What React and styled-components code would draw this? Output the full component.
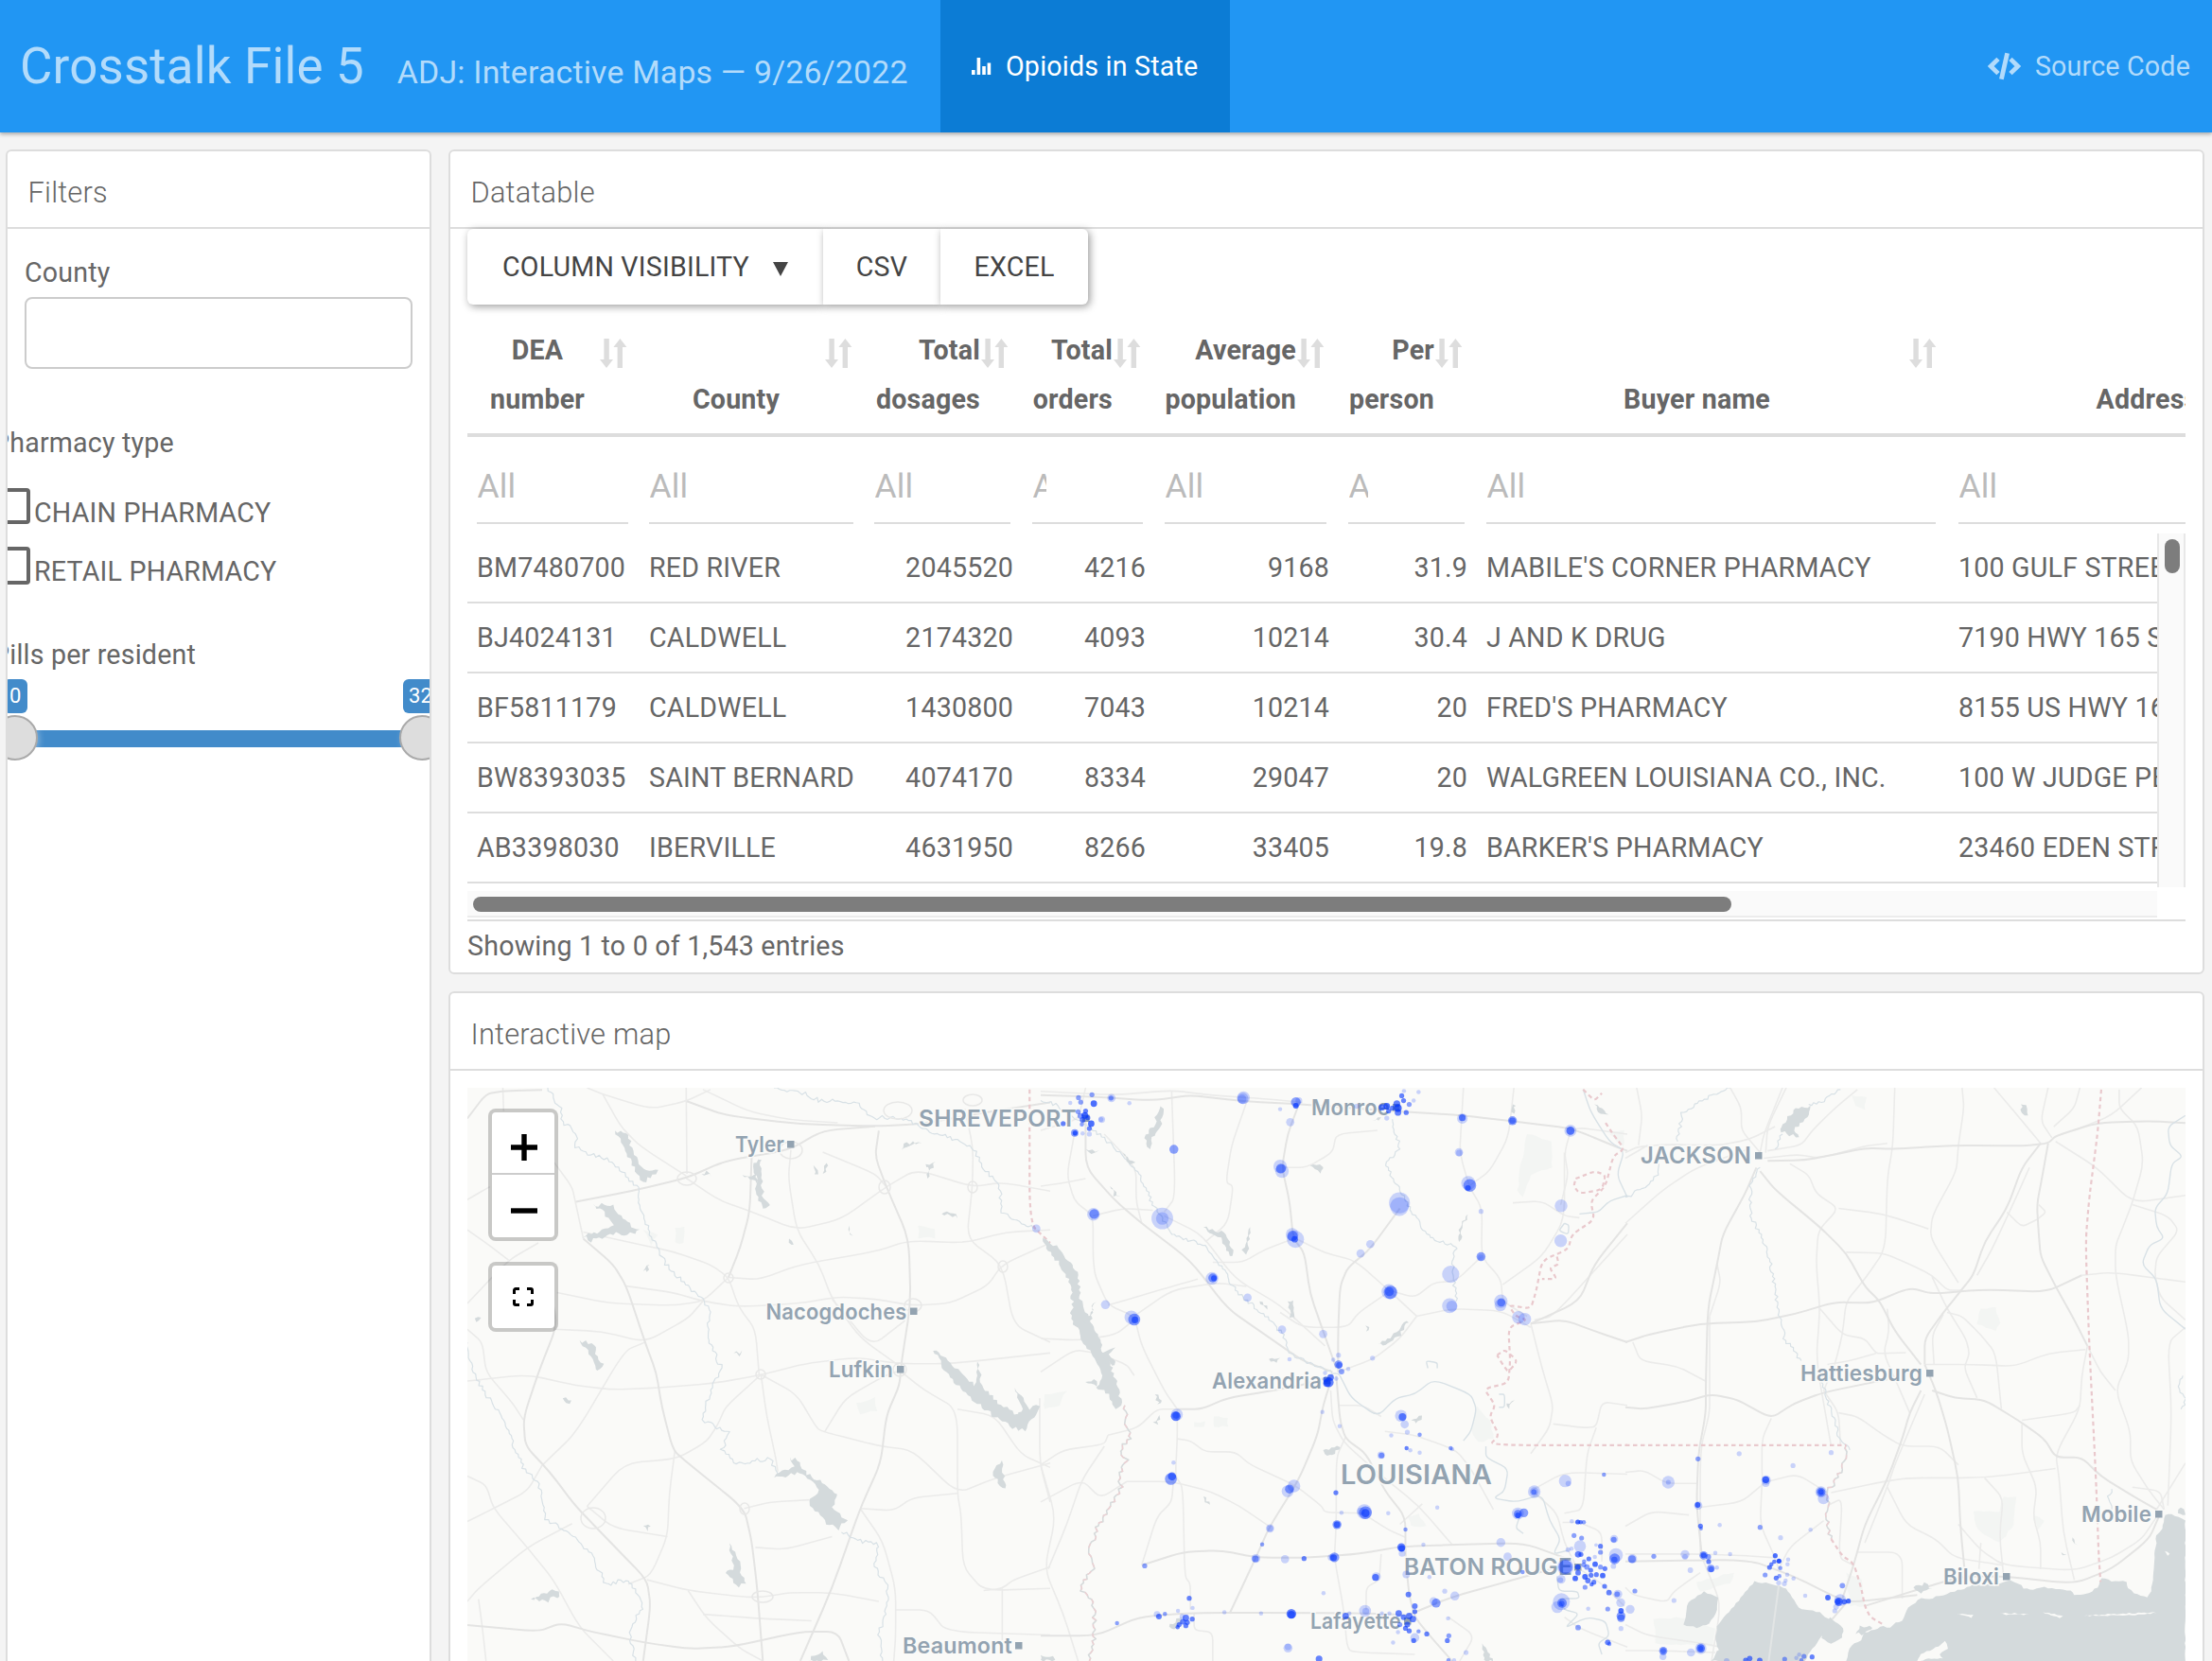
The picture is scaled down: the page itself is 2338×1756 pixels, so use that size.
import React from "react";
import styled, { createGlobalStyle } from "styled-components";

const GlobalStyle = createGlobalStyle`
  *, *::before, *::after { box-sizing: border-box; }
  html, body { margin: 0; padding: 0; }
  body {
    height: 1756px;
    overflow: hidden;
    background: #f4f4f4;
    color: #666;
    font-family: Roboto, "Liberation Sans", sans-serif;
    font-size: 28.6px;
    letter-spacing: 0.2px;
  }
`;

/* ---------- shell ---------- */

const Page = styled.div`
  display: flex;
  flex-direction: column;
  width: 2338px;
  height: 1756px;
  overflow: hidden;
`;

const Navbar = styled.header`
  display: flex;
  flex: none;
  height: 140px;
  background: #2196f3;
  color: #b2dbfb;
  line-height: 140px;
  box-shadow: 0 2px 4px rgba(0, 0, 0, 0.3);
`;

const Brand = styled.div`
  display: flex;
  align-items: baseline;
  width: 994px;
  height: 140px;
  padding-left: 21px;
  white-space: nowrap;
`;

const BrandTitle = styled.span`
  font-size: 52.8px;
  margin-right: 35px;
`;

const BrandNote = styled.span`
  font-size: 33.8px;
`;

const Tab = styled.a`
  display: flex;
  align-items: center;
  width: 306px;
  height: 140px;
  padding-left: 33px;
  background: #0c7cd5;
  color: #fff;
  svg { margin-right: 15px; }
`;

const SourceLink = styled.a`
  display: flex;
  align-items: center;
  height: 140px;
  margin-left: auto;
  padding-right: 23px;
  svg { margin-right: 14px; }
`;

const Main = styled.main`
  display: grid;
  grid-template-columns: 450px 1856px;
  column-gap: 18px;
  padding: 18px 8px 0 6px;
  flex: 1;
`;

const RightColumn = styled.div`
  display: flex;
  flex-direction: column;
  gap: 18px;
`;

const Card = styled.section`
  background: #fff;
  border: 2px solid #ddd;
  border-radius: 6px;
  overflow: hidden;
  height: ${(p) => p.$height}px;
`;

const CardTitle = styled.h2`
  margin: 0;
  height: 82px;
  padding: 7px 0 0 21.5px;
  border-bottom: 2px solid #ddd;
  font-size: 30.8px;
  font-weight: 300;
  line-height: 73px;
`;

/* ---------- filters ---------- */

const FilterBody = styled.div`
  padding: 20px 18px;
`;

const Label = styled.div`
  line-height: 52px;
  white-space: nowrap;
`;

const SelectBox = styled.div`
  height: 76px;
  border: 2px solid #ccc;
  border-radius: 8px;
`;

const FilterGroup = styled.div`
  margin: ${(p) => p.$top}px -22px 0 -34px;
`;

const CheckRow = styled.label`
  display: flex;
  align-items: flex-start;
  height: 52px;
  margin-top: ${(p) => p.$top}px;
  line-height: 52px;
  white-space: nowrap;
`;

const CheckBox = styled.span`
  width: 40px;
  height: ${(p) => p.$height}px;
  margin-right: 4px;
  border: 4px solid #666;
  border-radius: 4px;
`;

const Slider = styled.div`
  position: relative;
  height: 90px;
  padding: 54px 0 0 24px;
`;

const SliderBar = styled.div`
  height: 18px;
  background: #428bca;
`;

const SliderBubble = styled.span`
  position: absolute;
  top: 0;
  left: ${(p) => p.$x}px;
  height: 36px;
  padding: 0 6px;
  border-radius: 6px;
  background: #428bca;
  color: #fff;
  font-size: 22px;
  line-height: 36px;
`;

const SliderHandle = styled.span`
  position: absolute;
  top: 38px;
  left: ${(p) => p.$x}px;
  width: 48px;
  height: 48px;
  border: 2px solid #aaa;
  border-radius: 50%;
  background: #ddd;
  box-shadow: 2px 2px 6px rgba(255, 255, 255, 0.3);
`;

/* ---------- data table ---------- */

const TableBody = styled.div`
  padding: 0 18px;
`;

const ButtonBar = styled.div`
  display: flex;
  height: 80px;
`;

const TableButton = styled.button`
  width: ${(p) => p.$width}px;
  height: 80px;
  padding: 0;
  border: 0;
  border-radius: ${(p) => p.$radius || "0"};
  background: #fff;
  color: #444;
  font: inherit;
  letter-spacing: inherit;
  line-height: 80px;
  white-space: nowrap;
  box-shadow: 2px 2px 8px rgba(0, 0, 0, 0.4);
`;

const Caret = styled.span`
  display: inline-block;
  margin-left: 25px;
  border: 8px solid transparent;
  border-top: 15px solid #444;
  border-bottom: 0;
  vertical-align: 0;
`;

const COLUMNS = "182px 238px 167px 140px 194px 146px 499px 453px";

const Clip = styled.div`
  overflow: hidden;
  width: ${(p) => p.$width}px;
  height: ${(p) => p.$height}px;
`;

const GridRow = styled.div`
  display: grid;
  grid-template-columns: ${COLUMNS};
  width: 2019px;
`;

const HeadRow = styled(GridRow)`
  height: 140px;
  padding-bottom: 10px;
  border-bottom: 4px solid #ddd;
  align-items: end;
  font-weight: 700;
  line-height: 52px;
`;

const HeadCell = styled.div`
  display: flex;
  justify-content: space-between;
  height: 104px;
  padding: 0 ${(p) => (p.$num ? 15 : 13)}px 0 10px;
`;

const HeadText = styled.span`
  flex: 1;
  align-self: flex-end;
  text-align: ${(p) => (p.$num ? "right" : "center")};
  white-space: pre;
`;

const SortMark = styled.svg`
  flex: 0 0 29px;
  margin: 14px 0 0 ${(p) => (p.$num ? 1 : 2)}px;
`;

const FilterRow = styled(GridRow)`
  height: 102px;
`;

const FilterCell = styled.div`
  height: 92px;
  margin: 0 ${(p) => p.$end}px 0 10px;
  padding: 16px 0 0 0.5px;
  border-bottom: 2px solid #ddd;
  color: #bbb;
  font-size: 35.4px;
  line-height: 72px;
`;

const Placeholder = styled.div`
  overflow: hidden;
  width: ${(p) => p.$width}px;
`;

const ScrollArea = styled.div`
  display: grid;
  grid-template-columns: 1786px 30px;
  grid-template-rows: 378px 30px;
  border-bottom: 2px solid #ddd;
  height: 410px;
`;

const DataRow = styled(GridRow)`
  height: 74px;
  border-bottom: 2px solid #ddd;
  line-height: 72px;
`;

const DataCell = styled.div`
  padding: 0 10px;
  text-align: ${(p) => (p.$num ? "right" : "left")};
  white-space: nowrap;
`;

const VTrack = styled.div`
  height: 374px;
  padding: 6px 4px 0 6px;
  background: #fafafa;
  border: solid #e8e8e8;
  border-width: 0 2px;
`;

const VThumb = styled.div`
  width: 16px;
  height: 36px;
  border-radius: 8px;
  background: #7d7d7d;
`;

const HTrack = styled.div`
  height: 28px;
  padding: 6px 0 0 6px;
  background: #fafafa;
  border-bottom: 2px solid #ececec;
`;

const HThumb = styled.div`
  width: 1330px;
  height: 16px;
  border-radius: 8px;
  background: #7d7d7d;
`;

const Info = styled.div`
  line-height: 52px;
`;

/* ---------- map ---------- */

const MapFrame = styled.div`
  position: relative;
  margin: 18px 18px 0;
  height: 700px;
  background: #fafaf8;
`;

const MapSvg = styled.svg`
  display: block;
  width: 1816px;
  height: 700px;
  font-family: Inter, "Open Sans", sans-serif;
  font-weight: 600;
`;

const Controls = styled.div`
  position: absolute;
  top: 22px;
  left: 22px;
  display: flex;
  flex-direction: column;
  gap: 22px;
`;

const ControlBox = styled.div`
  width: 74px;
  border: 4px solid rgba(0, 0, 0, 0.2);
  border-radius: 8px;
  background: #fff;
  background-clip: padding-box;
`;

const ControlButton = styled.div`
  display: flex;
  align-items: center;
  justify-content: center;
  height: 66px;
  padding: ${(p) => (p.$glyph ? "10px 0 0 2px" : "0")};
  border-bottom: ${(p) => (p.$ruled ? "2px solid #ccc" : "0")};
`;

const TABLE_HEAD = [
  { text: "DEA\nnumber" },
  { text: "County" },
  { text: "Total\ndosages", num: true },
  { text: "Total\norders", num: true, clip: 14 },
  { text: "Average\npopulation", num: true },
  { text: "Per\nperson", num: true, clip: 20 },
  { text: "Buyer name" },
  { text: "Address" },
];

const FILTER_ENDS = [12, 12, 13, 13, 13, 13, 14, 0];

const ROWS = [
  ["BM7480700", "RED RIVER", "2045520", "4216", "9168", "31.9", "MABILE'S CORNER PHARMACY", "100 GULF STREET"],
  ["BJ4024131", "CALDWELL", "2174320", "4093", "10214", "30.4", "J AND K DRUG", "7190 HWY 165 SOUTH"],
  ["BF5811179", "CALDWELL", "1430800", "7043", "10214", "20", "FRED'S PHARMACY", "8155 US HWY 165"],
  ["BW8393035", "SAINT BERNARD", "4074170", "8334", "29047", "20", "WALGREEN LOUISIANA CO., INC.", "100 W JUDGE PEREZ"],
  ["AB3398030", "IBERVILLE", "4631950", "8266", "33405", "19.8", "BARKER'S PHARMACY", "23460 EDEN STREET"],
];

/* ---------- map geometry ---------- */

const parse = (s) => s.trim().split(/\s+/).map((p) => p.split(",").map(Number));

const smooth = (s) => {
  const p = parse(s);
  let d = `M${p[0][0]} ${p[0][1]}`;
  for (let i = 1; i < p.length - 1; i++) {
    const [x, y] = p[i];
    const a = p[i - 1];
    const b = p[i + 1];
    const k = 0.3;
    d += `L${x + (a[0] - x) * k} ${y + (a[1] - y) * k}Q${x} ${y} ${x + (b[0] - x) * k} ${y + (b[1] - y) * k}`;
  }
  const e = p[p.length - 1];
  return d + `L${e[0]} ${e[1]}`;
};

const noise = (n) => {
  const v = Math.sin(n * 127.1 + 11.7) * 43758.5453;
  return (v - Math.floor(v)) * 2 - 1;
};

const jagged = (s, amp, step, closed) => {
  const p = parse(s);
  if (closed) p.push(p[0]);
  let d = `M${p[0][0]} ${p[0][1]}`;
  let n = p[0][0];
  for (let i = 1; i < p.length; i++) {
    const [ax, ay] = p[i - 1];
    const [bx, by] = p[i];
    const len = Math.hypot(bx - ax, by - ay) || 1;
    const cuts = Math.max(1, Math.round(len / step));
    for (let c = 1; c <= cuts; c++) {
      const t = c / cuts;
      const off = c === cuts && i === p.length - 1 ? 0 : noise(n++) * amp;
      d += `L${(ax + (bx - ax) * t - ((by - ay) / len) * off).toFixed(1)} ${(ay + (by - ay) * t + ((bx - ax) / len) * off).toFixed(1)}`;
    }
  }
  return d + (closed ? "Z" : "");
};

const list = (s) => s.trim().split("\n").map((l) => l.trim()).filter(Boolean);

const WEST = {
  sx: 0.3954, sy: 0.4566, tx: -4, ty: -110,
  main: list(`
    320,590 400,650 435,700 485,830 515,900 530,980 560,1080 600,1110 750,1215 770,1290 785,1400 800,1568
    1110,340 1100,400 1130,470 1190,590 1195,740 1170,880 1165,930 1130,1000 1115,1110 1060,1215 985,1400 900,1568
    230,700 250,790 200,900 160,1005 165,1070 230,1130 300,1210 400,1300 490,1380 500,1440 480,1568
    300,505 450,480 595,450 700,410 870,385 960,340 1100,330
    597,272 700,305 900,325 1100,330 1220,325 1380,300 1568,275
    10,312 60,255 110,248 210,246
    10,1485 200,1500 260,1480 340,1500 480,1525 600,1540 720,1535 900,1500 1000,1500 1030,1568
    770,400 765,528 740,610 708,680`),
  minor: list(`
    105,241 107,295
    330,241 372,256 500,290 595,272 660,245
    372,256 420,330 470,375 595,445
    595,241 597,440
    640,245 760,295 870,315 1000,322
    230,400 290,470 300,510 320,590
    10,500 70,470
    10,740 120,640 200,600
    595,450 680,500 770,528 890,570 1010,545 1130,470 1210,430 1360,470 1440,460 1568,480
    708,680 640,735 560,745 390,740 250,715
    435,700 560,715 640,735 735,748 900,740 1000,725 1100,730 1200,745 1300,740 1400,700 1440,650 1568,600
    708,680 790,685 900,650 1100,620 1190,595 1340,600 1450,575 1568,570
    320,575 450,600 560,620 660,650 708,680 735,748 780,800 790,905
    875,385 868,450 890,570 950,650 985,730 1060,820 1165,885
    985,730 1090,840 1180,780
    960,390 1100,440 1130,470
    1340,290 1362,380 1360,470 1345,590 1440,650 1470,790 1568,830
    10,920 170,905 300,930 400,940 530,935 670,925 800,905 910,880 1050,865 1165,880 1300,880 1568,855
    10,800 50,830 60,900 130,970 160,1010
    210,1115 300,1040 430,850 485,830
    240,800 370,805 485,830 600,775 640,735
    795,905 700,980 680,1020 650,1060 570,1100 430,1110 330,1210
    795,905 810,1000 835,1100 840,1130
    795,905 890,950 945,1030 965,1038 1110,1070 1200,1080 1320,1180 1420,1145 1568,1110
    965,1038 1020,960 1120,910 1165,895 1230,940 1320,985 1320,1180 1330,1230 1335,1350 1390,1405 1568,1400
    1320,985 1420,1000 1490,1090 1568,1120
    750,1215 820,1200 925,1195
    10,1245 80,1215 170,1175 210,1115
    10,1140 60,1160 80,1215 170,1305 240,1380 310,1490 400,1568
    10,1430 40,1400 170,1305 290,1250
    565,1080 550,1180 545,1280 500,1370 440,1390
    545,1280 400,1260 330,1210
    490,1380 600,1405 750,1420 800,1420 870,1410 985,1410 1110,1430
    600,1405 650,1470 740,1540 800,1568
    640,1460 800,1470 930,1475
    780,1305 860,1310 985,1280
    1060,1215 1150,1220 1200,1190 1320,1180
    1060,1215 1120,1290 1155,1400 1155,1510 1150,1568
    1155,1450 1245,1450 1290,1500 1568,1508
    1390,1405 1440,1400 1470,1380 1568,1350
    1440,1400 1440,1520
    40,1425 50,1490 60,1568
    1540,960 1540,1110 1568,1200
    10,570 60,600 120,640`),
  rivers: list(`
    225,241 260,290 265,320 300,345 300,380 340,395 390,410 440,450 470,480 470,520 500,580 540,650 600,700 640,730 660,760 650,820 690,890 660,940 640,1010 710,1040 690,1080 730,1110 820,1100 840,1140
    10,830 25,900 60,950 100,1000 130,1060 160,1120 200,1160 220,1240 300,1280 340,1320 380,1390 440,1380 480,1440 440,1500 460,1568
    830,241 900,250 950,270 1050,275 1090,310 1170,310 1260,345 1340,370 1370,390 1390,430 1430,460 1440,530 1500,555 1530,565
    1010,1270 1060,1290 1110,1300 1100,1350 1135,1400 1130,1460 1110,1500 1120,1568`),
  borders: list(`1513,245 1513,555 1568,600`),
  lakes: list(`
    405,340 440,350 450,380 480,430 520,435 500,450 480,458 450,420 430,380
    345,510 400,515 430,550 470,570 460,580 400,580 340,595 320,585 370,570 400,555 375,530
    775,415 795,405 795,450 800,490 815,515 800,520 780,490 785,460
    745,443 785,440 785,462
    310,825 350,835 360,870 375,880 360,898 345,870
    1255,850 1290,865 1340,910 1365,930 1375,875 1385,930 1430,970 1480,1000 1495,985 1475,935 1515,985 1540,975 1520,1010 1500,1035 1460,1025 1400,990 1340,950 1290,900
    830,1143 850,1125 885,1118 870,1098 900,1105 912,1130 965,1160 1000,1180 985,1212 1025,1245 1000,1262 970,1250 940,1220 922,1200 950,1172 900,1130 860,1140
    710,1295 735,1330 745,1370 752,1390 735,1395 700,1365 725,1350
    180,1425 215,1412 245,1403 258,1417 225,1428
    1415,1130 1440,1105 1445,1140 1450,1168 1435,1160
    1235,418 1262,412 1250,430 1238,450 1245,425
    1170,385 1185,367 1225,370 1192,374
    1278,533 1300,528 1322,541 1300,538
    1030,560 1038,585 1028,575
    935,420 950,440 940,445
    960,440 970,415 972,435
    636,440 650,436 665,445
    480,665 495,648 492,668
    265,960 288,965 275,972
    480,1255 500,1253 490,1266
    920,1568 930,1558 960,1545 970,1568
    30,775 47,775 35,785
    870,590 885,600 877,605
    722,855 745,852 735,860`),
  parks: list(`
    565,565 590,565 590,600 565,600
    1215,560 1260,565 1260,590 1215,588
    1050,970 1100,960 1105,990 1060,995
    480,570 520,580 500,605`),
};

const MID = {
  sx: 0.3954, sy: 0.3929, tx: 606, ty: -10,
  main: list(`
    0,45 150,50 300,60 400,45 540,62 700,70 900,85 1130,100 1300,120 1420,135 1540,185 1568,195
    120,110 120,240 200,330 270,390 400,490 500,620 600,690 700,760 780,790
    690,70 660,150 645,240 665,330 675,430 705,470 720,580 755,680 790,780
    365,890 430,890 500,860 620,840 700,825 780,800
    780,800 755,880 740,960 690,1080 610,1210 575,1290 505,1440
    270,1310 380,1275 480,1270 580,1290 700,1290 850,1280 960,1260 1100,1255 1290,1250 1400,1290
    0,1500 150,1500 260,1450 400,1438 680,1438 900,1440 980,1445
    980,1445 1100,1395 1280,1345 1400,1310
    790,800 800,920 815,970 870,1010 920,1110 975,1180 975,1290 985,1390 1000,1450 1040,1500 1100,1568
    960,350 880,460 820,510 800,560 795,680 795,790
    1310,660 1440,600 1480,500 1568,390
    1310,660 1400,650 1480,680 1568,710`),
  minor: list(`
    0,35 200,45 350,32 450,45 600,55 700,65
    0,140 100,110 110,70 120,25
    90,150 70,260 90,330 140,370 140,480 145,530 180,610 250,640 270,720 330,840 365,890
    350,35 360,320 330,360
    140,370 220,350 300,355
    270,390 255,330 255,240 170,150
    330,370 430,420 520,540 640,610 760,720
    460,495 540,495 600,460 680,430
    0,290 70,280 120,270
    550,65 510,180 495,280 515,290 500,390 440,440
    645,240 710,240 780,200 790,150 900,140
    680,430 760,470 840,490 930,570 1005,640
    1130,25 1125,110 1120,200 1145,290 1180,350 1178,480 1230,540 1235,600 1300,640
    1145,290 1200,250 1250,160 1265,25
    1568,150 1420,130 1400,200 1410,260 1390,340
    1262,335 1340,330 1400,370 1440,375
    250,640 350,570 470,550 550,560
    180,610 250,590 350,560 420,540
    930,575 850,630 820,670 700,670 640,630
    1005,640 1100,620 1230,625 1310,670
    930,570 1000,590 1050,550 1110,545 1178,480
    795,790 890,755 960,700 1005,640
    1310,660 1340,780 1370,880 1360,940 1310,1010
    1370,930 1450,940 1485,938 1500,870 1568,880
    1320,650 1370,640 1568,420
    1235,555 1340,480 1400,380 1400,200
    0,790 90,730 150,740 230,770 250,800
    0,700 100,705 200,690 250,650
    180,960 260,940 310,890 365,890
    0,1040 60,1000 170,985 180,960
    365,890 365,970 360,1070 380,1100 385,1340 400,1360 400,1430
    365,970 400,975 440,1005 520,1005 560,1040 680,1095 750,1150 760,1168 860,1170
    230,1085 350,1085 450,1110 530,1150 610,1205
    775,840 780,920 810,980 900,1060 1010,1150 1100,1255
    795,880 860,880 910,910
    815,965 790,1020 790,1200 785,1290 810,1430 820,1540 860,1545 1000,1550
    860,1170 930,1215 975,1235
    1020,1145 960,1200
    910,1280 905,1350 870,1370 870,1430
    410,1440 410,1485 460,1490 460,1568
    270,1310 310,1180 350,1140 355,1080
    0,1040 40,1180 10,1320 60,1440 100,1568
    0,1140 110,1080 160,1130 230,1085
    170,990 110,1080 70,1200 20,1320
    1210,1160 1150,1050 1110,1000 1000,960 920,950
    1310,1110 1400,1060 1568,1065
    1320,1115 1380,1170 1400,1250 1430,1310
    1400,1170 1450,1160 1460,1010 1485,940
    1440,1320 1500,1360 1560,1420
    1395,1195 1440,1195 1500,1220 1500,1300
    1120,1568 1160,1500 1090,1450
    1400,1450 1440,1480 1568,1530`),
  rivers: list(`
    0,60 40,70 100,110 170,160 220,210 270,270 300,340 350,420 440,450 480,500 520,570 600,640 650,690 660,740 740,775 800,800
    940,110 960,190 920,230 960,300 1000,370 1040,430 1110,450 1100,500 1110,600`),
  calm: list(`
    800,800 830,860 900,910 950,860 1000,850 1050,810 1150,850 1165,890 1150,950 1130,975
    1450,30 1470,90 1520,170 1560,195 1540,260 1568,320
    1190,990 1190,1020 1250,1050 1240,1110 1210,1130 1270,1140 1340,1120 1360,1190 1390,1240 1370,1280 1410,1270
    1380,1340 1385,1380 1435,1380 1440,1400 1385,1400 1400,1430 1440,1440 1400,1480 1460,1450 1510,1460 1520,1500 1490,1520 1500,1550
    1400,390 1385,410 1410,420 1412,395 1400,390
    1568,315 1520,330 1490,360 1440,365
    1280,1180 1270,1210 1290,1225
    1035,780 1030,760 1060,765 1060,780
    1225,850 1240,850 1240,885 1225,885`),
  borders: list(`
    1450,30 1480,60 1500,40
    1510,120 1530,150 1560,190 1530,210 1510,290 1470,330 1480,380 1420,420 1410,460 1340,490 1325,570 1310,620 1250,610 1270,640 1300,650 1250,670 1255,760 1250,820 1185,835 1215,880 1200,910 1225,960 1200,987 1568,987
    1430,270 1480,250 1510,260 1500,300 1440,310 1425,290 1430,270
    1380,480 1385,500 1360,510 1380,540 1340,540
    1220,745 1240,730 1275,760 1250,790 1235,770 1220,745`),
  creeks: list(`225,880 230,930 240,970 210,1000 230,1030 210,1060 215,1100 185,1150 150,1210 130,1270 140,1320 115,1350 110,1380 140,1410 145,1500 130,1568`),
  lakes: list(`
    5,430 50,455 75,490 100,530 108,600 130,650 150,690 170,740 190,780 205,830 215,880 200,890 180,850 150,830 165,800 150,770 120,720 100,680 80,640 85,600 75,540 50,500 25,470
    110,650 135,630 145,600 130,660
    160,740 200,725 185,745 200,770 175,765
    150,830 120,815 150,812
    320,75 330,80 320,130 300,160 290,190 280,160 300,130
    935,700 975,650 985,655 960,690 930,715 900,715
    435,400 490,415 505,440 515,478 500,470 480,430
    560,400 555,440 550,475 540,470 548,430
    660,600 675,600 680,650 668,640
    720,235 755,235 745,255
    185,290 210,320 195,315
    755,1000 800,990 780,1015 760,1010
    305,850 325,865 315,880
    300,925 320,910 310,930
    1245,875 1268,870 1250,887
    1262,70 1270,70 1265,95 1258,90
    220,200 250,230 240,235
    610,755 640,752 630,765
    1480,70 1520,95 1490,90
    1180,1520 1200,1550 1210,1568 1185,1568
    0,1552 40,1560 30,1568 0,1568
    120,190 155,198 135,200
    1118,440 1122,400 1140,365 1126,410
    435,1125 455,1145 445,1147
    345,1468 378,1450 370,1480 350,1480
    885,112 910,105 905,115
    868,665 878,670 870,682
    990,920 1020,910 1005,930
    585,600 608,620 598,618`),
  parks: list(`
    1300,150 1365,170 1365,240 1310,260 1290,320 1275,300 1285,220
    1165,880 1200,920 1210,970 1170,980 1150,950
    980,1180 1010,1170 1030,1205 990,1205
    410,925 440,925 440,938 410,938
    463,910 500,915 500,938 463,938
    10,850 70,840 50,880 10,890
    1520,150 1560,140 1560,185`),
};

const EAST = {
  sx: 0.3954, sy: 0.3929, tx: 1224, ty: -10,
  main: list(`
    380,222 480,220 560,205 640,188 720,190 880,180 1060,182 1130,175 1150,155 1260,120 1400,115 1497,120
    1110,175 1060,240 1020,350 960,440 930,530 890,580 850,630 800,700 800,770
    1130,175 1115,260 1100,340 1105,420 1110,480 1150,560 1200,650 1235,720
    360,250 400,300 520,400 590,470 640,560 680,600 720,680 790,770
    350,240 320,310 260,420 245,500 220,620 215,820 215,900 195,1010 190,1150 205,1290
    0,710 60,690 200,660 350,655 450,635 560,602 660,605 760,563 820,580 960,568 1125,575 1220,530
    790,840 760,900 740,970 700,1080 640,1200 610,1310 580,1400
    800,770 830,840 860,940 890,1075 895,1200 910,1360
    820,840 880,860 960,865 1050,920 1120,970 1150,1020 1220,1020 1270,1070 1350,1120 1420,1160
    640,1420 800,1370 900,1340 1010,1340 1200,1360 1300,1320 1400,1240 1430,1170
    0,1300 330,1295 450,1340 560,1395 600,1410 780,1390
    600,1400 540,1470 500,1520 460,1568
    0,885 50,890 160,870 230,850 300,865 390,915 450,875 530,845 700,810`),
  minor: list(`
    0,200 30,185 100,178 250,180 330,165 400,130
    0,215 60,180
    280,25 310,80 310,140 360,200
    370,215 460,205 520,215 640,182 700,175
    430,25 380,130 375,200
    420,25 370,150 360,200
    620,30 560,80 500,140 470,180 380,195
    985,25 1040,90 1110,175
    1140,160 1110,115 1130,25
    1215,25 1200,80 1145,130
    1150,170 1260,240 1355,335 1497,315
    1380,25 1300,100 1200,140
    1320,30 1320,80 1370,130 1385,230 1355,335 1330,400 1310,450 1310,530 1345,690 1345,760 1310,840 1350,950 1350,1030 1400,1110 1440,1160
    900,25 905,80 890,180 885,250 820,370 815,430 890,550
    720,25 715,180 700,270 695,460 640,540 590,600 580,690 560,770 530,840
    1080,240 1040,330 980,460 940,530
    440,230 490,260 510,310 570,350 515,410 510,500 520,620 510,760 550,990
    570,350 690,365 810,405
    590,468 690,470 760,500 820,530 860,570 900,570
    225,640 225,840 225,900 200,1000 200,1290
    245,500 255,550 225,640
    1220,530 1300,522 1497,548
    20,710 40,760 140,775 215,815
    390,915 365,970 365,1080 380,1090
    800,850 770,920 720,1040 700,1100 640,1250
    800,770 930,770 1040,775 1130,740 1230,730
    1235,720 1220,800 1215,890 1150,1010 1160,1080 1170,1220 1200,1350
    1060,920 1200,900 1215,880
    820,535 860,620 910,700 920,740 905,780 940,860
    860,630 900,640 950,690 990,740 1005,890
    850,635 820,690 825,770
    520,620 580,690 640,700 670,740 690,740 750,738
    540,770 600,760 670,740
    700,620 705,680 690,740 730,830 760,900
    530,840 570,900 575,990
    570,900 620,910 690,960 740,990 840,990 890,1040
    550,1115 690,1085 760,1075 960,1075 1150,1050
    380,1085 460,1065 540,1115
    700,1100 750,1200 830,1240 880,1290 1010,1310
    960,1075 1010,1130 1000,1230 1010,1330
    890,1200 950,1270 1010,1310 1200,1325 1300,1290 1380,1240 1420,1180
    0,1280 200,1280 330,1285 400,1290
    195,1155 310,1140 370,1090
    0,1205 70,1165 170,1175
    0,1060 50,1055 110,1090 190,1090
    365,1090 360,1200 400,1290 410,1320
    410,1320 440,1260 530,1190
    540,1150 580,1130 570,1290 610,1310
    620,1275 740,1275 740,1400
    0,1370 20,1390 110,1410 130,1380 200,1330
    205,1290 250,1400 250,1450 230,1568
    0,1470 60,1500 240,1525 300,1550
    0,1540 90,1540 240,1545
    1060,930 1060,1010 1100,1100 1090,1180 1110,1250 1110,1320
    1440,1160 1430,1110 1355,1100
    1420,1160 1497,1035
    1450,1150 1460,900 1450,710 1497,670
    1240,730 1270,790 1310,840
    0,390 100,300 190,240 330,190
    30,25 45,100 35,180
    1355,340 1450,370 1480,410 1420,480 1415,530 1430,590 1497,650
    950,1250 945,1320
    1105,340 1125,360 1100,380
    1020,360 1060,400 1100,380`),
  rivers: list(`
    280,25 230,45 150,95 140,170
    90,230 90,260 40,300 0,320
    360,240 335,290 335,370 380,460 395,540 415,650 425,700 470,760
    520,790 540,870 570,960 600,1000
    575,30 530,60 490,70
    400,190 420,150
    1490,800 1480,830 1497,870 1485,890
    1300,1105 1290,1125 1300,1160`),
  calm: list(`1497,100 1450,130 1455,180 1490,210 1460,230 1450,310 1415,350 1420,400 1440,430 1400,450 1380,500 1420,540 1430,620 1497,675`),
  borders: list(`
    1272,30 1262,150 1240,320 1230,440 1240,720 1258,1080 1265,1280 1270,1355
    0,987 590,987
    550,1240 580,1285 610,1305 630,1370 640,1420 655,1450 690,1470`),
  creeks: list(`590,987 585,1030 565,1080 540,1110 545,1150 535,1180 550,1240`),
  lakes: list(`
    455,80 495,75 480,110 450,140 465,158 430,150 413,138 430,110
    1057,70 1070,75 1075,100 1060,98
    1195,1235 1210,1255 1200,1250
    1165,1275 1180,1280 1172,1286
    615,1495 630,1475 660,1475 640,1495
    770,1370 800,1360 820,1375 790,1385
    1477,1170 1485,1155 1497,1175`),
  bays: list(`
    590,1568 600,1535 612,1520 630,1512 640,1492 665,1482 690,1475 708,1478 722,1464 740,1460 748,1440 755,1424 775,1412 790,1398 812,1402 830,1395 858,1388 880,1380 905,1373 930,1362 960,1364 1000,1358 1030,1352 1050,1358 1065,1372 1090,1376 1120,1368 1150,1376 1190,1378 1200,1390 1225,1388 1240,1384 1262,1370 1272,1345 1300,1352 1340,1355 1342,1372 1360,1385 1395,1396 1406,1380 1410,1340 1414,1300 1420,1230 1436,1212 1442,1175 1460,1172 1497,1190 1497,1800 590,1800
    345,1353 385,1360 430,1372 450,1405 462,1425 520,1436 548,1460 530,1495 500,1535 478,1568 440,1800 255,1800 250,1545 240,1510 245,1475 290,1420
    210,1380 248,1398 245,1430 225,1468 190,1478 155,1470 168,1410
    548,1450 582,1480 580,1505 550,1522 525,1505 530,1470
    230,1568 245,1540 265,1545 250,1568`),
  islands: list(`
    885,1441 930,1443 925,1452
    1000,1438 1080,1442 1010,1443
    1108,1434 1170,1446 1160,1451
    1225,1446 1330,1440 1420,1438 1330,1446
    780,1568 790,1550 830,1532 855,1515 862,1535 840,1550 850,1560 810,1562
    1442,1272 1455,1280 1450,1285`),
  parks: list(`
    930,1165 1000,1165 1010,1125 1045,1125 1040,1200 1000,1250 960,1230 935,1200
    1090,1175 1120,1190 1100,1215
    605,45 645,50 640,85 615,75
    950,620 990,615 1000,660 990,680 940,660
    75,1455 150,1450 240,1480 235,1530 80,1520
    190,1355 290,1330 280,1360 200,1380
    590,1330 630,1350 640,1420 600,1420`),
  causeway: "410,1365 396,1470 383,1568",
};

const TILES = [WEST, MID, EAST];

/* loops of ring roads around towns: x, y, rx, ry */
const RINGS = [
  [232, 96, 10, 7], [342, 66, 12, 9], [455, 24, 15, 9], [441, 105, 6, 7], [276, 201, 5, 5],
  [534, 105, 5, 6], [566, 189, 5, 6], [310, 303, 5, 5], [293, 445, 5, 6], [312, 538, 11, 6],
  [457, 298, 7, 7], [471, 230, 9, 7], [534, 13, 10, 6], [133, 455, 13, 11],
];

const tileDots = {
  mid: `137,44,6,2;142,68,8,4;101,52,6,2;107,64,6,2;79,66,5,1;189,53,11,1;188,53,6,2;237,67,5,1;60,122,6,3;91,147,10,2;92,147,6,4;112,148,5,1;130,150,6,1;163,111,9,1;161,111,6,1;135,122,8,4;130,135,6,3;118,100,9,4;112,112,7,3;120,88,6,3;100,90,6,2;126,106,6,3;106,101,7,2;110,124,5,2;
540,54,15,1;542,52,17,1;538,56,12,1;682,64,13,2;690,60,9,1;682,74,7,4;640,83,5,1;667,118,11,1;356,191,12,2;
845,75,6,1;912,78,8,3;925,75,8,4;930,88,6,3;952,68,9,3;955,80,10,4;955,92,8,3;970,60,6,3;965,47,6,3;971,34,5,1;1010,37,5,1;997,60,5,1;985,70,6,2;977,92,6,3;925,107,6,1;940,80,6,3;
640,237,18,1;645,250,18,1;642,243,13,2;1127,108,14,1;1127,106,9,3;1261,114,12,2;1261,114,8,2;1416,141,16,1;1416,141,11,3;1118,199,11,1;1119,201,8,1;
325,377,29,1;325,377,17,1;141,366,17,1;143,365,13,2;672,420,17,1;681,433,23,1;679,433,8,3;673,424,14,2;
959,335,28,1;959,345,25,1;1143,282,19,1;1147,288,17,2;1142,295,7,3;1177,358,6,1;1391,343,17,1;1390,437,17,1;881,446,11,1;855,471,11,1;1177,480,12,2;1176,482,7,1;1096,527,23,1;458,538,17,1;460,537,12,2;463,538,7,3;553,590,11,1;931,574,20,1;935,576,18,2;932,574,12,2;1093,612,20,1;1099,613,15,1;1230,600,18,1;1229,610,16,1;1231,603,11,2;1277,643,17,1;1294,648,17,1;173,609,12,1;242,643,18,1;250,649,16,2;252,650,9,3;645,676,11,1;755,688,11,1;665,756,5,1;887,753,6,1;
796,745,6,1;796,770,11,2;798,772,8,2;804,789,7,2;822,782,5,1;782,757,5,1;770,818,13,3;765,820,10,3;775,805,8,3;762,810,7,2;790,808,5,1;760,793,5,1;753,898,5,1;799,936,5,1;
364,905,16,1;361,909,13,3;362,907,9,2;963,908,16,1;967,911,10,3;973,931,11,1;980,952,6,1;937,961,5,1;1013,959,5,2;978,995,5,3;988,1001,5,1;1013,1007,5,1;1096,995,5,2;1100,998,5,1;910,1014,10,1;911,1015,7,2;355,1034,5,1;348,1078,16,2;351,1071,11,3;677,1097,17,1;660,1111,16,1;665,1105,12,2;789,1115,6,3;
865,1166,20,1;868,1169,17,2;868,1170,11,3;856,1165,10,1;804,1169,5,1;929,1170,5,1;1060,1155,5,1;792,1201,12,2;792,1201,8,3;613,1211,11,1;613,1211,8,1;975,1214,5,2;592,1254,5,2;964,1262,11,3;965,1265,8,3;966,1278,9,1;1023,1255,5,1;1230,1249,12,1;1248,1287,11,1;575,1292,12,1;574,1293,9,2;653,1294,11,1;704,1292,6,3;785,1289,13,2;783,1290,9,3;776,1289,9,1;278,1312,6,2;897,1341,12,1;895,1343,9,3;977,1335,10,1;1039,1342,5,1;756,1385,5,1;397,1399,6,3;983,1389,7,3;1080,1380,6,1;1107,1393,12,1;1050,1407,11,1;1057,1412,12,2;867,1433,16,1;869,1434,9,1;491,1437,5,1;589,1440,5,1;670,1441,13,3;670,1443,10,3;204,1466,5,2;311,1442,8,1;316,1448,7,3;332,1441,5,2;367,1433,5,1;
370,1470,6,3;380,1462,7,3;388,1452,8,3;392,1464,6,3;366,1477,5,3;388,1473,6,3;378,1448,6,1;405,1455,6,3;406,1425,5,1;
815,1447,8,3;825,1440,5,1;912,1440,5,1;932,1440,5,1;957,1440,8,3;970,1450,7,3;985,1447,8,3;1000,1420,7,3;1000,1435,6,3;995,1455,8,3;980,1470,7,3;975,1480,6,3;985,1487,6,3;960,1470,6,2;955,1490,5,1;1000,1505,12,1;997,1513,6,3;1010,1488,5,2;1032,1495,6,3;1087,1513,6,3;1091,1500,6,2;1089,1453,5,1;942,1518,5,1;661,1533,12,1;661,1530,8,1;1137,1545,6,1;744,1562,9,3;1090,1566,5,2;1105,1566,5,1`,
  delta: `65,63,20,1;65,63,14,1;64,64,8,2;163,29,20,1;173,37,8,1;286,9,6,2;490,33,20,1;490,33,7,1;13,132,19,1;13,134,13,2;32,130,14,2;13,138,8,3;184,157,6,1;203,159,7,4;212,160,6,3;222,160,6,2;191,202,7,2;215,210,7,2;318,213,13,1;317,215,9,2;210,236,19,1;204,262,10,3;213,262,7,3;261,232,5,1;275,236,7,3;275,255,7,2;324,264,22,1;320,276,17,2;319,279,10,2;316,299,8,1;376,276,15,1;375,277,12,2;444,268,7,2;543,262,14,1;543,270,9,1;172,247,7,1;183,244,6,1;
164,302,26,1;164,302,22,2;150,341,14,1;148,343,8,1;238,276,7,3;257,270,6,1;203,302,9,4;222,295,7,2;232,302,8,2;258,293,8,4;275,302,7,2;289,307,7,3;244,312,7,3;223,284,6,2;204,320,8,3;226,333,9,4;235,345,8,3;245,328,7,3;262,326,7,3;282,329,8,4;254,350,7,3;247,357,6,3;226,366,7,2;195,338,8,4;288,363,7,3;302,383,8,3;330,388,14,1;328,388,8,2;339,415,14,1;384,378,7,2;151,412,27,1;153,416,15,2;152,418,9,2;138,429,19,1;236,434,6,1;298,435,7,2;340,441,8,4;340,457,14,2;340,464,12,2;369,436,14,1;340,497,7,1;204,494,8,2;298,541,8,3;303,546,6,2;28,318,6,2;508,408,7,1;474,568,13,2;474,568,9,2;473,586,11,1;593,560,18,1;593,560,13,3;593,560,7,2;562,573,13,1;
800,26,15,1;799,25,11,4;799,36,12,1;974,64,18,1;974,64,14,2;974,64,9,3;982,85,18,1;585,107,13,1;583,105,8,4;592,172,7,3;594,180,5,2;653,169,6,1;781,176,7,2;941,184,6,1;846,209,7,1;602,265,13,2;602,265,9,3;617,270,8,2;618,285,7,3;625,307,12,2;626,309,8,2;644,304,6,1;639,257,6,1;686,261,6,1;560,312,8,1;829,266,7,4;841,283,7,6;826,285,6,3;817,293,6,3;811,303,7,3;845,305,6,2;870,278,6,1;868,293,6,1;797,327,7,2;832,337,7,3;842,331,6,2;840,352,7,1;858,355,7,1;862,345,6,1;867,326,6,1;887,338,6,1;924,393,6,1;996,399,8,4;1042,361,8,2;1035,407,19,1;1030,412,13,3;1028,412,9,3;1048,412,8,3;1061,410,7,4;1022,428,9,1;1018,441,7,1;
946,587,7,3;920,585,7,2;905,580,6,1;859,594,7,2;896,590,6,1;912,598,6,2;748,592,8,3;735,597,7,3;780,598,8,3;675,600,9,1`,
  east: `304,1010,6,1;194,1024,6,2;550,1007,6,1;448,1042,6,1`,
  west: `1531,567,11,1`,
};

const plot = (s, sx, sy, tx, ty) =>
  s.split(";").map((q) => q.trim()).filter(Boolean).map((q) => {
    const [x, y, r, n] = q.split(",").map(Number);
    return { x: x * sx + tx, y: y * sy + ty, r: r * sx + (r < 9 ? 0.25 : 0), a: 1 - Math.pow(n > 1 ? 0.74 : 0.8, n) };
  });

const DOTS = [
  ...plot(tileDots.west, 0.3954, 0.4566, -4, -110),
  ...plot(tileDots.mid, 0.3954, 0.3929, 606, -10),
  ...plot(tileDots.east, 0.3954, 0.3929, 1224, -10),
  ...plot(tileDots.delta, 1 / 3, 1 / 3, 1106, 406),
];

/* name, x, baseline, width, font size, town marker x */
const PLACES = [
  ["SHREVEPORT", 477, 40.5, 167, 24, 650],
  ["Tyler", 283, 68, 52, 23.5, 338],
  ["Nacogdoches", 315.5, 244.5, 149, 23.5, 468],
  ["Lufkin", 382, 306, 68, 23.5, 454],
  ["Beaumont", 460, 598, 116, 23.5, 579],
  ["Monroe", 892, 29, 83, 23.5, 978],
  ["Alexandria", 787, 318, 116, 23.5, 905],
  ["LOUISIANA", 923, 419, 160, 28, 0],
  ["BATON ROUGE", 990, 515, 178, 24, 1170],
  ["Lafayette", 891, 572, 96, 23.5, 990],
  ["JACKSON", 1240, 80, 117, 24, 1361],
  ["Hattiesburg", 1409, 310, 129, 23.5, 1542],
  ["Biloxi", 1560, 525, 59, 23.5, 1623],
  ["Mobile", 1706, 459, 74, 23.5, 1784],
];

const Tile = ({ t }) => (
  <g transform={`translate(${t.tx} ${t.ty}) scale(${t.sx} ${t.sy})`} fill="none" strokeLinejoin="round">
    {t.parks.map((p) => <path key={p} d={jagged(p, 3, 14, true)} fill="#f3f5f3" />)}
    {t.minor.map((p) => <path key={p} d={smooth(p)} stroke="#ebebea" strokeWidth="1.6" vectorEffect="non-scaling-stroke" />)}
    {t.main.map((p) => <path key={p} d={smooth(p)} stroke="#e4e4e3" strokeWidth="2" vectorEffect="non-scaling-stroke" />)}
    {t.rivers.map((p) => <path key={p} d={jagged(p, 5, 7)} stroke="#d8e1e6" strokeWidth="1.2" vectorEffect="non-scaling-stroke" />)}
    {(t.calm || []).map((p) => <path key={p} d={smooth(p)} stroke="#d8e1e6" strokeWidth="1.4" vectorEffect="non-scaling-stroke" />)}
    {t.lakes.map((p) => <path key={p} d={jagged(p, 5, 8, true)} fill="#d4dadc" />)}
    {(t.bays || []).map((p) => <path key={p} d={jagged(p, 2, 10, true)} fill="#d4dadc" />)}
    {(t.islands || []).map((p) => <path key={p} d={jagged(p, 2, 8, true)} fill="#fafaf8" />)}
    {t.causeway && <path d={smooth(t.causeway)} stroke="#e2e5e5" strokeWidth="2" vectorEffect="non-scaling-stroke" />}
    {(t.creeks || []).map((p) => (
      <React.Fragment key={p}>
        <path d={jagged(p, 6, 8)} stroke="#d6dadb" strokeWidth="1.6" vectorEffect="non-scaling-stroke" />
        <path d={jagged(p, 6, 8)} stroke="#ecd0d3" strokeWidth="1.4" strokeDasharray="5 6" vectorEffect="non-scaling-stroke" />
      </React.Fragment>
    ))}
    {t.borders.map((p) => <path key={p} d={smooth(p)} stroke="#e9c9cd" strokeWidth="2.2" strokeDasharray="4.5 3.5" vectorEffect="non-scaling-stroke" />)}
  </g>
);

const BarsIcon = () => (
  <svg width="21" height="20" viewBox="0 0 21 20" fill="currentColor">
    <path d="M0 14h3.6v5H0zM5.6 1h3.6v18H5.6zM11.2 10h3.6v9h-3.6zM16.6 6.5h3.6V19h-3.6z" />
  </svg>
);

const CodeIcon = () => (
  <svg width="37" height="30" viewBox="0 0 37 30" fill="none" stroke="currentColor" strokeWidth="4.8">
    <path d="M12 7.400 4.200 15l7.800 7.600M25 7.400 32.800 15 25 22.600" />
    <path d="M21.6 1.2 15.4 28.8" />
  </svg>
);

const SortIcon = ({ num }) => (
  <SortMark width="29" height="32" viewBox="0 0 29 32" fill="#ddd" $num={num}>
    <path d="M4.4 0h5.4v22H14l-7 9-7-9h4.400zM18.600 31V9h-4.200l7-9 7 9h-4.400v22z" />
  </SortMark>
);

const PlusIcon = () => (
  <svg width="28" height="28" viewBox="0 0 28 28">
    <path d="M11.3 0h5.4v11.3H28v5.4H16.7V28h-5.4V16.7H0v-5.4h11.3z" />
  </svg>
);

const MinusIcon = () => (
  <svg width="28" height="28" viewBox="0 0 28 28">
    <path d="M0 11.3h28v5.4H0z" />
  </svg>
);

const FullscreenIcon = () => (
  <svg width="22" height="20" viewBox="0 0 22 20" fill="none" stroke="#000" strokeWidth="3">
    <path d="M1.5 7V3a1.5 1.5 0 0 1 1.5-1.5h4M15 1.5h4A1.5 1.5 0 0 1 20.500 3v4M20.500 13v4a1.500 1.500 0 0 1-1.500 1.500h-4M7 18.500H3A1.500 1.500 0 0 1 1.500 17v-4" />
  </svg>
);

const MapView = () => (
  <MapFrame>
    <MapSvg viewBox="0 0 1816 700">
      {TILES.map((t, i) => <Tile key={i} t={t} />)}
      <g fill="none" stroke="#e8e8e7" strokeWidth="1.5">
        {RINGS.map(([x, y, rx, ry]) => <ellipse key={`${x}-${y}`} cx={x} cy={y} rx={rx} ry={ry} />)}
      </g>
      <g fill="#93a3b1">
        {PLACES.map(([name, x, y, w, size, mark]) => (
          <g key={name}>
            <text x={x} y={y} fontSize={size} textLength={w} lengthAdjust="spacingAndGlyphs" stroke="#fafaf8" strokeWidth="3" paintOrder="stroke">
              {name}
            </text>
            {mark > 0 && <rect x={mark} y={y - 12} width="7.500" height="7.500" />}
          </g>
        ))}
      </g>
      <g fill="#0033ff">
        {DOTS.map((d, i) => <circle key={i} cx={d.x} cy={d.y} r={d.r} fillOpacity={d.a} />)}
      </g>
    </MapSvg>
    <Controls>
      <ControlBox>
        <ControlButton $ruled $glyph><PlusIcon /></ControlButton>
        <ControlButton $glyph><MinusIcon /></ControlButton>
      </ControlBox>
      <ControlBox>
        <ControlButton><FullscreenIcon /></ControlButton>
      </ControlBox>
    </Controls>
  </MapFrame>
);

export default function App() {
  return (
    <Page>
      <GlobalStyle />
      <Navbar>
        <Brand>
          <BrandTitle>Crosstalk File 5</BrandTitle>
          <BrandNote>ADJ: Interactive Maps — 9/26/2022</BrandNote>
        </Brand>
        <Tab><BarsIcon />Opioids in State</Tab>
        <SourceLink><CodeIcon />Source Code</SourceLink>
      </Navbar>
      <Main>
        <Card $height={1640}>
          <CardTitle>Filters</CardTitle>
          <FilterBody>
            <Label>County</Label>
            <SelectBox />
            <FilterGroup $top={52}>
              <Label>Pharmacy type</Label>
              <CheckRow $top={22}><CheckBox $height={38} />CHAIN PHARMACY</CheckRow>
              <CheckRow $top={10}><CheckBox $height={40} />RETAIL PHARMACY</CheckRow>
            </FilterGroup>
            <FilterGroup $top={36}>
              <Label>Pills per resident</Label>
              <Slider>
                <SliderBar />
                <SliderBubble $x={12}>0</SliderBubble>
                <SliderBubble $x={434}>32</SliderBubble>
                <SliderHandle $x={0} />
                <SliderHandle $x={430} />
              </Slider>
            </FilterGroup>
          </FilterBody>
        </Card>
        <RightColumn>
          <Card $height={872}>
            <CardTitle>Datatable</CardTitle>
            <TableBody>
              <ButtonBar>
                <TableButton $width={376} $radius="6px 0 0 6px">COLUMN VISIBILITY<Caret /></TableButton>
                <TableButton $width={124}>CSV</TableButton>
                <TableButton $width={156} $radius="0 6px 6px 0">EXCEL</TableButton>
              </ButtonBar>
              <Clip $width={1816} $height={242}>
                <HeadRow>
                  {TABLE_HEAD.map((c) => (
                    <HeadCell key={c.text} $num={c.num}>
                      <HeadText $num={c.num}>{c.text}</HeadText>
                      <SortIcon num={c.num} />
                    </HeadCell>
                  ))}
                </HeadRow>
                <FilterRow>
                  {TABLE_HEAD.map((c, i) => (
                    <FilterCell key={c.text} $end={FILTER_ENDS[i]}>
                      <Placeholder $width={c.clip || 60}>All</Placeholder>
                    </FilterCell>
                  ))}
                </FilterRow>
              </Clip>
              <ScrollArea>
                <Clip $width={1786} $height={378}>
                  {ROWS.map((row) => (
                    <DataRow key={row[0]}>
                      {row.map((cell, i) => (
                        <DataCell key={i} $num={TABLE_HEAD[i].num}>{cell}</DataCell>
                      ))}
                    </DataRow>
                  ))}
                </Clip>
                <VTrack><VThumb /></VTrack>
                <HTrack><HThumb /></HTrack>
              </ScrollArea>
              <Info>Showing 1 to 0 of 1,543 entries</Info>
            </TableBody>
          </Card>
          <Card $height={900}>
            <CardTitle>Interactive map</CardTitle>
            <MapView />
          </Card>
        </RightColumn>
      </Main>
    </Page>
  );
}
